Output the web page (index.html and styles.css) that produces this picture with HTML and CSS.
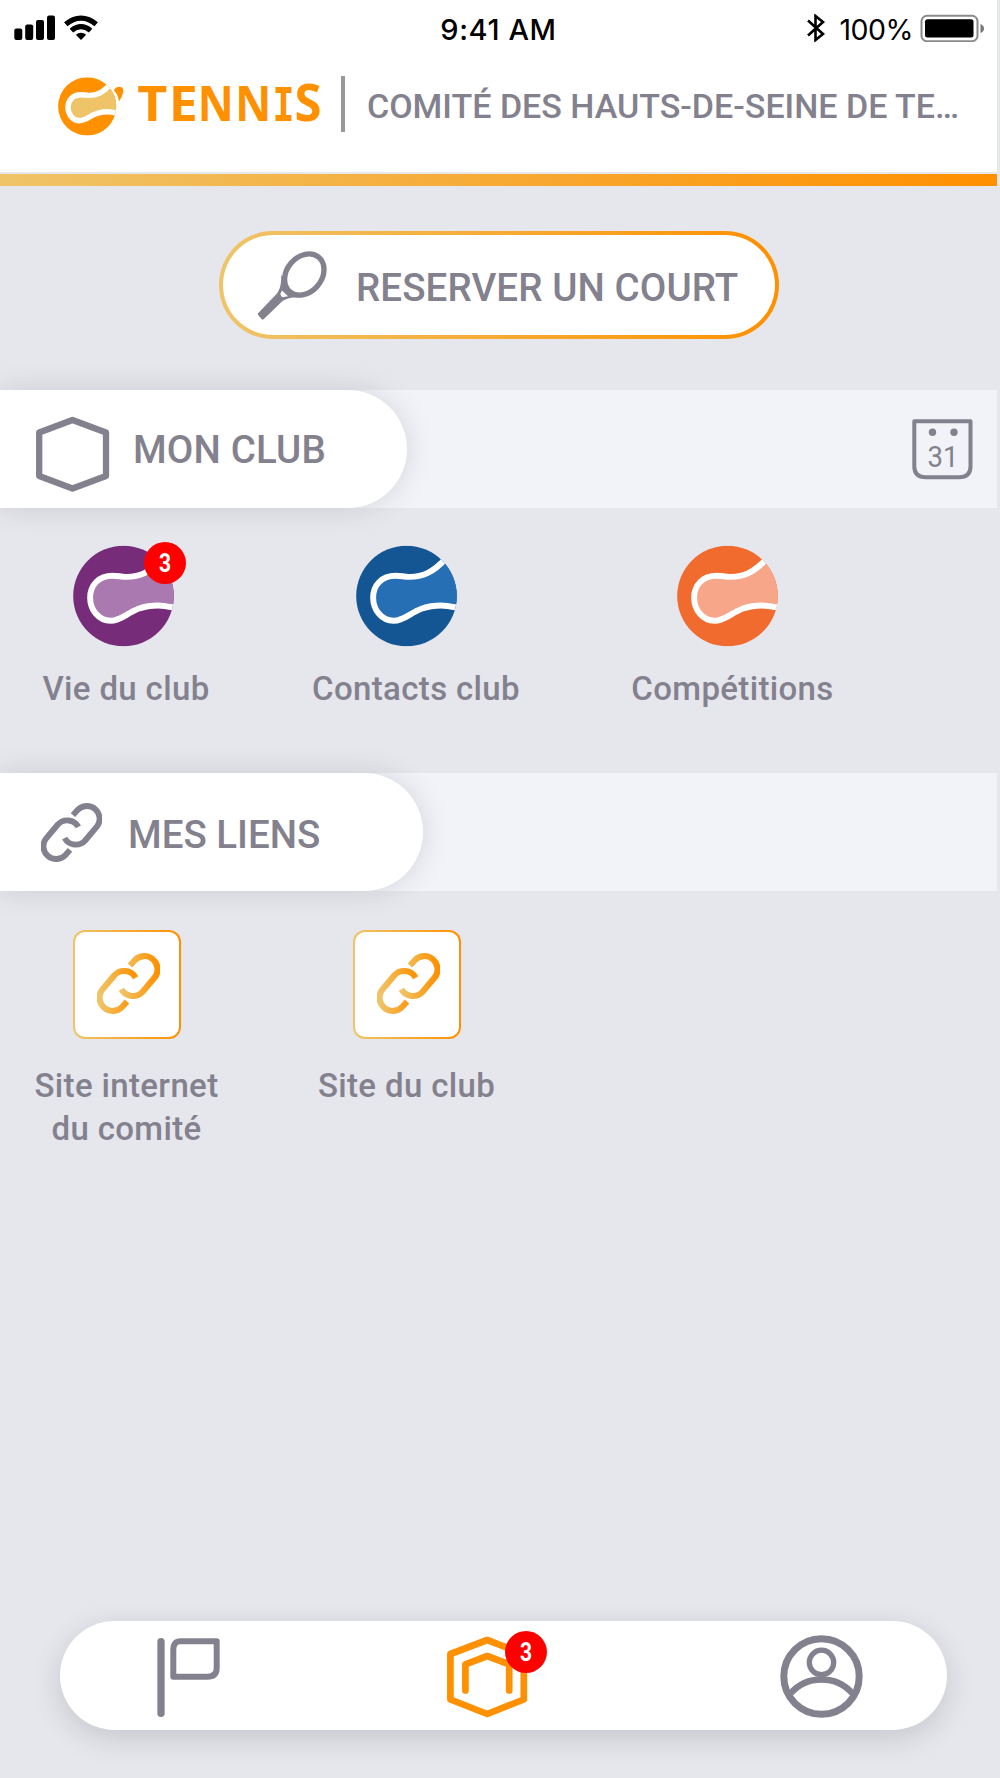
FILE: index.html
```html
<!DOCTYPE html>
<html lang="fr">
<head>
<meta charset="utf-8">
<title>Tennis - Mon club</title>
<link rel="stylesheet" href="styles.css">
</head>
<body>
<svg class="defs" width="0" height="0" aria-hidden="true">
  <defs>
    <clipPath id="disc"><circle cx="51" cy="51" r="50.8"/></clipPath>
    <linearGradient id="gold" x1="0" y1="0" x2="1" y2="0">
      <stop offset="0" stop-color="#efc468"/><stop offset="1" stop-color="#ff9000"/>
    </linearGradient>
    <symbol id="ball" viewBox="0 0 102 102">
      <g clip-path="url(#disc)">
        <rect width="102" height="102" fill="var(--dark)"/>
        <path d="M90 14C77 28 67 32 53 31.7C48 31.5 45 30.5 40 30.5C26 30.5 17.3 40 17.3 52.7C17.3 65 26 76 38 76C53 76 58 60.5 86 60.5C91 60.5 96 61.5 104 63V14Z" fill="var(--light)"/>
        <path d="M92 12C77 28 67 32 53 31.7C48 31.5 45 30.5 40 30.5C26 30.5 17.3 40 17.3 52.7C17.3 65 26 76 38 76C53 76 58 60.5 86 60.5C91 60.5 96 61.5 104 63" fill="none" stroke="#fff" stroke-width="var(--seam)"/>
      </g>
    </symbol>
    <symbol id="link" viewBox="0 0 62 62">
      <path d="M32.5 13.3L37.1 8.1A13 13 0 0 1 56.9 24.9L44.9 39.1A13 13 0 0 1 24 36.7"/>
      <path d="M29.5 48.7L24.9 53.9A13 13 0 0 1 5.1 37.1L17.1 22.9A13 13 0 0 1 38 25.3"/>
    </symbol>
  </defs>
</svg>
<div class="app">
  <header class="header">
    <div class="status">
      <svg class="signal" width="86" height="28" viewBox="0 0 86 28">
        <rect x="0.3" y="14.5" width="8" height="11.5" rx="2"/>
        <rect x="11.2" y="10.5" width="8" height="15.5" rx="2"/>
        <rect x="22" y="6" width="8" height="20" rx="2"/>
        <rect x="33" y="1.5" width="8" height="24.5" rx="2"/>
        <g fill="none" stroke="#000" stroke-width="5.2">
          <path d="M51.8 10.3C61 2 73 2 82.2 10.3"/>
          <path d="M57.4 16.6C63.5 11.3 70.5 11.3 76.6 16.6"/>
        </g>
        <path d="M61.8 20.8C65 18 69 18 72.2 20.8L67 26Z"/>
      </svg>
      <span class="time">9:41 AM</span>
      <div class="power">
        <svg width="18" height="28" viewBox="0 0 18 28"><path d="M1 6.5L16 20L8.500 26V2L16 8L1 21.5" fill="none" stroke="#000" stroke-width="2.6"/></svg>
        <span class="percent">100%</span>
        <svg width="66" height="28" viewBox="0 0 66 28">
          <rect x="1.5" y="1.8" width="56" height="25.400" rx="5.5" fill="none" stroke="#8a8a8a" stroke-width="2"/>
          <rect x="5" y="5.3" width="48.5" height="18.300" rx="2.5"/>
          <path d="M60.5 10Q64 11.500 64 14.500Q64 17.500 60.500 19Z" fill="#777"/>
        </svg>
      </div>
    </div>
    <div class="brand">
      <svg class="logo" width="264" height="60" viewBox="0 0 264 60">
        <use class="ball-logo" href="#ball" x="0" y="0.200" width="58.400" height="58.400"/>
        <path d="M55.800 13.200C58.500 8.500 64.500 9 65.300 12.500C65.500 17 63.300 20.700 61 24.500C60.300 19.500 58.700 16 55.800 13.200Z" fill="#ff9000"/>
        <text class="wordmark" y="44"><tspan x="79.300" textLength="30" lengthAdjust="spacingAndGlyphs">T</tspan><tspan x="110.800" textLength="29" lengthAdjust="spacingAndGlyphs">E</tspan><tspan x="139.800" textLength="36" lengthAdjust="spacingAndGlyphs">N</tspan><tspan x="177.300" textLength="36" lengthAdjust="spacingAndGlyphs">N</tspan><tspan class="slab" x="214.500" textLength="22" lengthAdjust="spacingAndGlyphs">I</tspan><tspan class="big" x="236.500" textLength="27" lengthAdjust="spacingAndGlyphs">S</tspan></text>
      </svg>
      <span class="divider"></span>
      <h1 class="club">COMITÉ DES HAUTS-DE-SEINE DE TE…</h1>
    </div>
  </header>
  <div class="stripe"></div>
  <main class="main">
    <button class="reserve">
      <svg width="72" height="70" viewBox="0 0 72 70">
        <ellipse cx="48.300" cy="23.500" rx="22.500" ry="17.500" transform="rotate(-50 48.300 23.500)" fill="none" stroke="#84818e" stroke-width="5.400"/>
        <path d="M25.200 24C25.500 34 23.500 39 21 42.500L2.300 62Q1.300 63.200 2.300 64.300L5.500 68Q6.700 69.200 7.900 68L26.500 50C32 46.500 38 46.300 45 46.200L40 41.500C34 41 30.500 36 29.500 29Z" fill="#84818e"/>
        <path d="M26 39.500L32 45.200L26.500 46.300Q24.500 45 24.300 43Z" fill="#fff"/>
      </svg>
      <span>RESERVER UN COURT</span>
    </button>
    <section class="band">
      <div class="tab tab-club">
        <svg width="74" height="76" viewBox="0 0 74 76"><path d="M36.500 4L70 16.500V60L36.500 72.500L3.200 60V16.500Z" fill="none" stroke="#84818e" stroke-width="6.300" stroke-linejoin="round"/></svg>
        <h2>MON CLUB</h2>
      </div>
      <svg class="calendar" width="61" height="61" viewBox="0 0 61 61">
        <path d="M2.300 2.300H58.500V47.500Q58.500 58.300 47 58.300H14Q2.300 58.300 2.300 47.500Z" fill="none" stroke="#84818e" stroke-width="4" stroke-linejoin="round"/>
        <circle cx="20.500" cy="13.300" r="3.700" fill="#84818e"/><circle cx="42" cy="13.300" r="3.700" fill="#84818e"/>
        <text x="15.500" y="48" textLength="31" lengthAdjust="spacingAndGlyphs">31</text>
      </svg>
    </section>
    <div class="items items-club">
      <a class="item">
        <span class="icon icon-vie"><svg class="purple" width="101" height="102"><use href="#ball"/></svg><b class="badge"><i>3</i></b></span>
        <span class="label">Vie du club</span>
      </a>
      <a class="item">
        <span class="icon icon-contacts"><svg class="blue" width="101" height="102"><use href="#ball"/></svg></span>
        <span class="label">Contacts club</span>
      </a>
      <a class="item">
        <span class="icon icon-comp"><svg class="orange" width="101" height="102"><use href="#ball"/></svg></span>
        <span class="label">Compétitions</span>
      </a>
    </div>
    <section class="band">
      <div class="tab tab-links">
        <svg class="gray-link" width="61" height="61"><use href="#link"/></svg>
        <h2>MES LIENS</h2>
      </div>
    </section>
    <div class="items items-links">
      <a class="item">
        <span class="tile"><svg class="gold-link" width="63" height="63"><use href="#link"/></svg></span>
        <span class="label">Site internet<br>du comité</span>
      </a>
      <a class="item">
        <span class="tile"><svg class="gold-link" width="63" height="63"><use href="#link"/></svg></span>
        <span class="label">Site du club</span>
      </a>
    </div>
  </main>
  <nav class="nav">
    <svg width="64" height="80" viewBox="0 0 64 80" fill="none" stroke="#84818e" stroke-linecap="round" stroke-linejoin="round">
      <path d="M4 3.700V75.300" stroke-width="7.300"/>
      <path d="M23.500 3.200H59.700V30Q59.700 38.800 50 38.800H16.300V11.500Q16.300 3.200 23.500 3.200Z" stroke-width="6"/>
    </svg>
    <span class="home">
      <svg width="81" height="83" viewBox="0 0 81 83" fill="none" stroke="#ff9000" stroke-width="6.700" stroke-linecap="round" stroke-linejoin="round">
        <path d="M40.200 4L76.800 18V63.500L40.200 78L3.400 63.500V18Z"/>
        <path d="M18.400 54.500V28.300L40.200 20L62.200 28.300V54.500"/>
      </svg>
      <b class="badge"><i>3</i></b>
    </span>
    <svg width="83" height="83" viewBox="0 0 83 83" fill="none" stroke="#84818e">
      <circle cx="41.500" cy="41.500" r="37.700" stroke-width="7"/>
      <circle cx="41.500" cy="27.400" r="12.200" stroke-width="5.300"/>
      <path d="M10.500 58.500A41.300 41.300 0 0 1 72.500 58.500" stroke-width="6.300"/>
    </svg>
  </nav>
</div>
</body>
</html>
```
FILE: styles.css
```css
* { box-sizing: border-box; }
body { margin: 0; background: #e6e7ed; font-family: Roboto, sans-serif; color: #84818e; }
.defs { position: absolute; }
.app { width: 1000px; height: 1778px; display: flex; flex-direction: column; overflow: hidden; }

.header { width: 997px; height: 172px; background: #fff; flex: none; }
.status { height: 56px; padding: 14px 11px 0 14px; display: grid; grid-template-columns: 1fr auto 1fr; align-items: start; font-family: Inter, sans-serif; color: #000; font-size: 29px; line-height: 32px; }
.time { font-weight: 500; letter-spacing: .6px; margin-right: 3px; }
.power { display: flex; justify-content: flex-end; align-items: flex-start; }
.percent { margin: 0 7px 0 14px; font-size: 28.500px; letter-spacing: -.5px; }
.brand { display: flex; padding: 20px 0 0 58px; height: 100px; }
.logo { display: block; overflow: visible; margin-top: 1px; }
.ball-logo { --dark: #ff9000; --light: #efc468; --seam: 9.500px; }
.wordmark { fill: #ff9000; font: 700 47.500px "Noto Sans", sans-serif; }
.wordmark .slab { font-family: "DejaVu Sans Mono", monospace; font-size: 46px; }
.wordmark .big { font-size: 52px; }
.divider { width: 4px; height: 56px; background: #999; margin: 0 22px 0 19px; }
.club { margin: 10px 0 0; font-size: 34px; line-height: 40px; font-weight: 500; white-space: nowrap; }
.stripe { width: 997px; height: 12px; margin-top: 2px; flex: none; background: linear-gradient(90deg, #efc468, #ff9000); }

.main { flex: 1; padding-top: 45px; }
.reserve { display: flex; align-items: flex-start; width: 560px; height: 108px; margin: 0 0 0 219px; padding: 16px 0 0 33px; gap: 28px; border: 3.500px solid transparent; border-radius: 54px; background: linear-gradient(#fff, #fff) padding-box, linear-gradient(90deg, #efc468, #ff9000) border-box; font: 500 38.500px/46px Roboto, sans-serif; letter-spacing: .1px; color: #84818e; white-space: nowrap; }
.reserve { border-width: 4px; }
.reserve span { margin-top: 14px; }
.band { display: flex; justify-content: space-between; width: 997px; height: 118px; margin-top: 51px; background: #f1f3f8; }
.tab { display: flex; height: 118px; background: #fff; border-radius: 0 59px 59px 0; box-shadow: 0 0 30px rgba(0, 0, 0, .12); }
.tab h2 { margin: 0; font-size: 38.500px; line-height: 46px; font-weight: 500; white-space: nowrap; }
.tab-club { width: 407px; padding: 26px 0 0 36px; gap: 23px; }
.tab-club h2 { margin-top: 11px; letter-spacing: .15px; }
.tab-links { width: 423px; padding: 29px 0 0 41px; gap: 26px; }
.tab-links h2 { margin-top: 10px; }
.calendar { margin: 29px 24px 0 0; }
.calendar text { font: 400 30px Roboto, sans-serif; fill: #84818e; }

.items { display: grid; }
.items-club { grid-template-columns: 252px 328px 305px; height: 265px; padding-top: 37px; }
.items-club + .band { margin-top: 0; }
.items-links { grid-template-columns: 253px 307px; padding-top: 39px; }
.item { display: flex; flex-direction: column; align-items: center; }
.icon { position: relative; height: 102px; }
.icon svg { display: block; --seam: 6px; }
.icon-vie { margin-right: 5px; }
.icon-contacts { margin-right: 19px; }
.icon-comp { margin-right: 11px; }
.purple { --dark: #762c79; --light: #aa79af; }
.blue { --dark: #145594; --light: #276fb4; }
.orange { --dark: #f16a2e; --light: #f7a68a; }
.label { font-size: 33px; line-height: 43px; font-weight: 500; letter-spacing: .35px; text-align: center; margin-top: 20px; white-space: nowrap; }
.badge { position: absolute; width: 42px; height: 42px; border-radius: 50%; background: #f00; color: #fff; font: 700 25px/43px Roboto, sans-serif; text-align: center; }
.badge i { display: block; font-style: normal; transform: scaleX(.84); }
.icon .badge { left: 71px; top: -3px; }
.tile { display: flex; width: 108px; height: 109px; padding: 20px 0 0 22px; border: 2px solid transparent; border-radius: 12px; background: linear-gradient(#fff, #fff) padding-box, linear-gradient(90deg, #efc468, #ff9000) border-box; }
.items-links .label { margin-top: 25px; }
.gray-link { fill: none; stroke: #84818e; stroke-width: 6px; }
.gold-link { fill: none; stroke: url(#gold); stroke-width: 6px; }

.nav { display: flex; flex: none; justify-content: space-between; align-items: flex-start; width: 887px; height: 109px; margin: 0 0 48px 60px; padding: 14px 84px 0 97px; background: #fff; border-radius: 55px; box-shadow: 0 8px 30px rgba(0, 0, 0, .14); }
.nav svg { display: block; }
.nav > svg:first-child { margin-top: 3px; }
.home { position: relative; margin: 1px 26px 0 0; }
.home .badge { left: 58px; top: -5px; }
```
